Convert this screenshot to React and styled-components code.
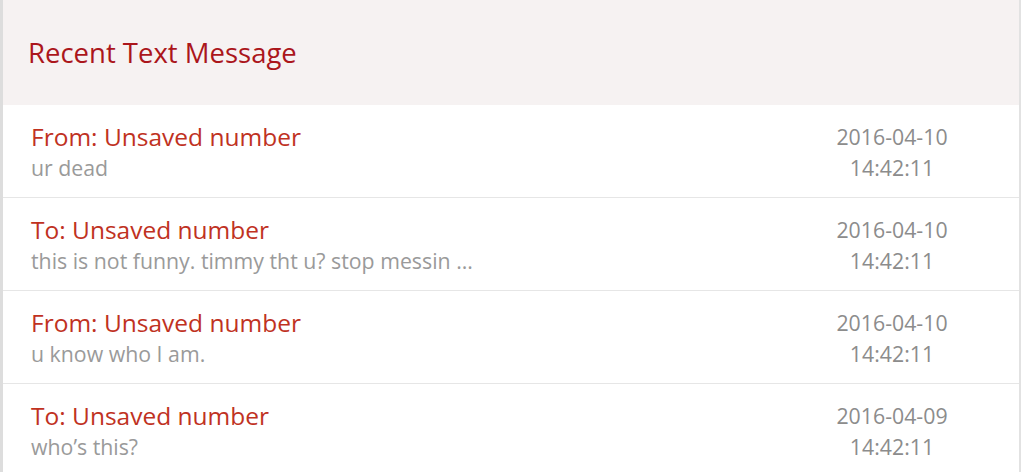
import React from "react";
import styled, { createGlobalStyle } from "styled-components";

const messages = [
  { dir: "From", text: "ur dead", date: "2016-04-10", time: "14:42:11" },
  {
    dir: "To",
    text: "this is not funny. timmy tht u? stop messin ...",
    date: "2016-04-10",
    time: "14:42:11",
  },
  { dir: "From", text: "u know who I am.", date: "2016-04-10", time: "14:42:11" },
  { dir: "To", text: "who\u2019s this?", date: "2016-04-09", time: "14:42:11" },
];

function App() {
  return (
    <>
      <GlobalStyle />
      <Panel>
        <Header>
          <Title>Recent Text Message</Title>
        </Header>
        <List>
          {messages.map((m, i) => (
            <Row key={i}>
              <Content>
                <Contact>{m.dir}: Unsaved number</Contact>
                <Preview>{m.text}</Preview>
              </Content>
              <Stamp>
                <span>{m.date}</span>
                <span>{m.time}</span>
              </Stamp>
            </Row>
          ))}
        </List>
      </Panel>
    </>
  );
}

export default App;

const GlobalStyle = createGlobalStyle`
  body {
    margin: 0;
    background: #fff;
    font-family: "Open Sans", "Noto Sans", sans-serif;
  }
`;

const Panel = styled.div`
  width: 1021px;
  height: 472px;
  box-sizing: border-box;
  border-left: 3px solid #dddddd;
  border-right: 2px solid #e2e2e2;
  overflow: hidden;
`;

const Header = styled.div`
  height: 105px;
  display: flex;
  align-items: center;
  padding: 0 25px;
  background: #f6f2f2;
`;

const Title = styled.h1`
  margin: 0;
  font-size: 27.5px;
  font-weight: 400;
  color: #ab161c;
`;

const List = styled.div`
  display: flex;
  flex-direction: column;
`;

const Row = styled.div`
  height: 93px;
  box-sizing: border-box;
  display: flex;
  align-items: flex-start;
  padding: 16px 47px 0 28px;
  border-bottom: 1px solid #e6e6e6;
`;

const Content = styled.div`
  flex: 1;
  display: flex;
  flex-direction: column;
`;

const Contact = styled.div`
  font-size: 24.5px;
  line-height: 31px;
  color: #c0321f;
`;

const Preview = styled.div`
  font-size: 21.3px;
  line-height: 31px;
  color: #9a9a9a;
`;

const Stamp = styled.div`
  width: 160px;
  display: flex;
  flex-direction: column;
  align-items: center;
  font-size: 21.3px;
  line-height: 31px;
  color: #8c8c8c;
`;
